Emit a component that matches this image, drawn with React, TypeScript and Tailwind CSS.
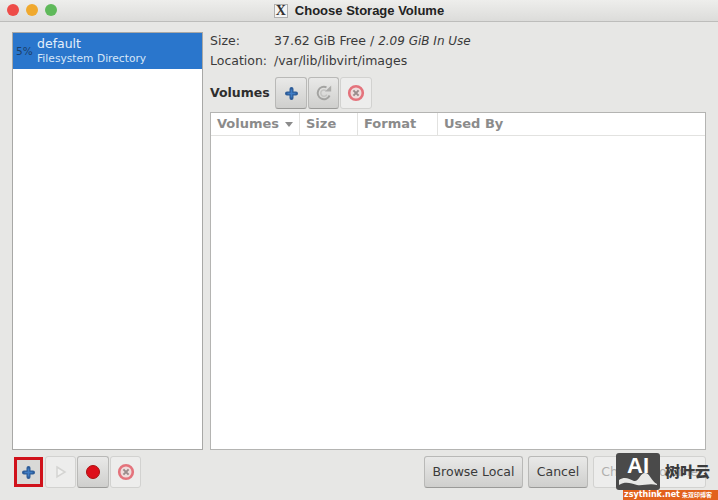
function PlusIcon() {
  return (
    <svg width="13" height="13" viewBox="0 0 13 13">
      <path d="M6.5 2v9M2 6.5h9" stroke="#2d5c98" strokeWidth="4" strokeLinecap="round" />
      <path d="M6.5 2.5v8M2.5 6.5h8" stroke="#3f7cc4" strokeWidth="1.6" />
    </svg>
  )
}

function RefreshIcon() {
  return (
    <svg width="18" height="18" viewBox="0 0 18 18" fill="none">
      <path d="M14.6 11.5A6.2 6.2 0 1 1 11.5 3.4" stroke="#a3a3a1" strokeWidth="1.9" />
      <path d="M11.8 10.6a3.2 3.2 0 1 1 -.8 -4" stroke="#c4c4c2" strokeWidth="1.5" />
      <path d="M10 7.6h6.2V1.6z" fill="#adadab" />
    </svg>
  )
}

function StopIcon() {
  return (
    <svg width="18" height="18" viewBox="0 0 18 18" fill="none">
      <circle cx="9" cy="9" r="6.8" fill="#efdcdc" stroke="#e4737c" strokeWidth="2.6" />
      <path d="M6.4 6.4l5.2 5.2M11.6 6.4l-5.2 5.2" stroke="#9a8c8c" strokeWidth="2" />
    </svg>
  )
}

function ToolButton({ children, flat, className = "" }: { children: React.ReactNode; flat?: boolean; className?: string }) {
  return (
    <div
      className={`flex items-center justify-center rounded-[3px] border ${
        flat
          ? "border-[#d2d2d0] bg-[#ededec]"
          : "border-[#b9b9b7] border-b-[#9a9a98] bg-gradient-to-b from-[#e9e9e8] to-[#cfcfcd]"
      } ${className}`}
    >
      {children}
    </div>
  )
}

function ColumnHead({ label, width, arrow }: { label: string; width: string; arrow?: boolean }) {
  return (
    <div className={`flex items-center gap-[6px] border-r border-[#e2e2e0] pl-[6px] ${width}`}>
      <span className="text-[13px] font-bold text-[#8b8b8b]">{label}</span>
      {arrow && <span className="mt-[1px] h-0 w-0 border-x-[4.5px] border-t-[5px] border-x-transparent border-t-[#8b8b8b]" />}
    </div>
  )
}

export default function App() {
  return (
    <main className="relative flex h-[500px] w-[718px] flex-col overflow-hidden bg-[#e7e7e5] font-['DejaVu_Sans',sans-serif] text-[#3a3a3a]">
      {/* Title bar */}
      <header className="relative flex h-[22px] shrink-0 items-center justify-center border-b border-[#bdbdbb] bg-gradient-to-b from-[#eeeeec] to-[#dcdcda]">
        <div className="absolute left-[7px] top-[4px] flex gap-[7px]">
          <span className="h-[12px] w-[12px] rounded-full bg-[#ee4c48]" />
          <span className="h-[12px] w-[12px] rounded-full bg-[#f0a92e]" />
          <span className="h-[12px] w-[12px] rounded-full bg-[#5fb95a]" />
        </div>
        <div className="flex items-center gap-[7px]">
          <span className="flex h-[14px] w-[14px] items-center justify-center border border-[#b0b0b0] bg-[#f4f4f4] font-['Liberation_Serif',serif] text-[14px] font-bold leading-none text-[#333]">
            X
          </span>
          <span className="font-['Liberation_Sans',sans-serif] text-[13px] font-bold text-[#222]">Choose Storage Volume</span>
        </div>
      </header>

      <div className="flex min-h-0 flex-1 flex-col px-[12px] pt-[10px]">
        <div className="flex h-[418px] gap-[7px]">
          {/* Pool list */}
          <aside className="h-full w-[191px] shrink-0 border border-[#a8a8a6] bg-white">
            <div className="flex h-[36px] items-center gap-[3px] bg-[#2a76cc] pl-[3px]">
              <span className="mt-[1px] w-[18px] text-[10.5px] text-[#1d3f68]">5%</span>
              <div className="flex flex-col">
                <span className="text-[12.5px] leading-[15px] text-[#e4eefa]">default</span>
                <span className="mt-[1px] text-[10.7px] leading-[14px] text-[#d6e6f8]">Filesystem Directory</span>
              </div>
            </div>
          </aside>

          {/* Pool details */}
          <section className="flex min-w-0 flex-1 flex-col">
            <div className="flex h-[18px] items-center text-[12.5px]">
              <span className="w-[64px]">Size:</span>
              <span>
                37.62 GiB Free / <em className="text-[12px]">2.09 GiB In Use</em>
              </span>
            </div>
            <div className="mt-[1px] flex h-[21px] items-center text-[12.5px]">
              <span className="w-[64px]">Location:</span>
              <span>/var/lib/libvirt/images</span>
            </div>
            <div className="mt-[5px] flex h-[32px] items-center gap-[1px]">
              <span className="mr-[7px] w-[57px] whitespace-nowrap text-[12.5px] font-bold text-[#2e2e2e]">Volumes</span>
              <ToolButton className="h-[32px] w-[32px]"><PlusIcon /></ToolButton>
              <ToolButton className="h-[32px] w-[31px]"><RefreshIcon /></ToolButton>
              <ToolButton flat className="h-[32px] w-[32px]"><StopIcon /></ToolButton>
            </div>
            <div className="mt-[3px] flex flex-1 flex-col border border-[#b4b4b2] bg-white">
              <div className="flex h-[23px] shrink-0 border-b border-[#e2e2e0]">
                <ColumnHead label="Volumes" width="w-[89px]" arrow />
                <ColumnHead label="Size" width="w-[58px]" />
                <ColumnHead label="Format" width="w-[80px]" />
                <ColumnHead label="Used By" width="w-[100px] border-r-0" />
              </div>
            </div>
          </section>
        </div>

        {/* Bottom buttons */}
        <footer className="mt-[6px] flex h-[32px] items-center justify-between">
          <div className="flex items-center gap-[1px]">
            <div className="ml-[2px] mr-[1px] flex h-[30px] w-[29px] items-center justify-center border-[3px] border-[#d0121b] bg-[#d9d9d7]">
              <PlusIcon />
            </div>
            <ToolButton flat className="h-[32px] w-[31px]">
              <svg width="12" height="14" viewBox="0 0 12 14" fill="none">
                <path d="M2 2l8 5-8 5z" stroke="#d4d4d2" strokeWidth="1.5" fill="#f2f2f1" />
              </svg>
            </ToolButton>
            <ToolButton className="h-[32px] w-[32px]">
              <span className="h-[14px] w-[14px] rounded-full border border-[#a11] bg-[#dd0f1a]" />
            </ToolButton>
            <ToolButton flat className="h-[32px] w-[31px]"><StopIcon /></ToolButton>
          </div>
          <div className="flex items-center gap-[5px] text-[12.5px]">
            <ToolButton className="h-[32px] w-[99px]">Browse Local</ToolButton>
            <ToolButton className="h-[32px] w-[60px]">Cancel</ToolButton>
            <ToolButton flat className="h-[32px] w-[113px] text-[#b0b0ae]">Choose Volume</ToolButton>
          </div>
        </footer>
      </div>

      {/* Watermark */}
      <div className="absolute left-[616px] top-[453px] flex h-[37px] w-[44px] items-start justify-center overflow-hidden rounded-[3px] bg-[#4a4a4a]">
        <span className="font-['Liberation_Sans',sans-serif] text-[22px] font-bold leading-[25px] text-white">AI</span>
        <svg className="absolute bottom-[2px] left-[3px]" width="38" height="16" viewBox="0 0 38 16">
          <path d="M0 8c6-4 10-1 15 1 5 1 6-8 11-8 5 0 6 8 12 11v4H0z" fill="#e8e8e6" />
          <path d="M0 13c6-4 12-2 18 0 6 1 12-2 20 0v3H0z" fill="#4a4a4a" />
        </svg>
      </div>
      <span className="absolute left-[665px] top-[460px] font-['Noto_Sans_CJK_SC',sans-serif] text-[15px] font-black leading-[22px] text-[#3c3c3c]">
        树叶云
      </span>
      <div className="absolute left-[623px] top-[490px] flex h-[10px] w-[95px] items-center gap-[2px] overflow-hidden whitespace-nowrap bg-[#e2611c] pl-[1px] font-bold leading-[10px] text-white">
        <span className="text-[8px]">zsythink.net</span>
        <span className="font-['Noto_Sans_CJK_SC',sans-serif] text-[6px]">朱双印博客</span>
      </div>
    </main>
  )
}
